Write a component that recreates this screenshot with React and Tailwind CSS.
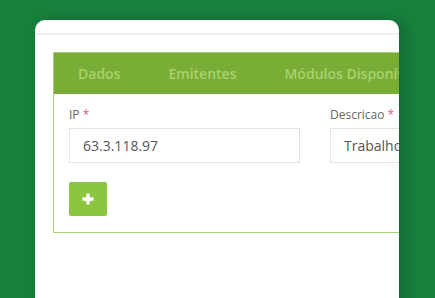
import React from 'react';

const TABS = ['Dados', 'Emitentes', 'Módulos Disponíveis'];

const Field = ({ label, value }) => (
  <div className="flex flex-col w-[231px] shrink-0">
    <label className="text-[12px] text-[#666] leading-[16px] h-[16px]">
      {label} <span className="text-[#e0607e]">*</span>
    </label>
    <input
      readOnly
      value={value}
      className="mt-[5px] h-[35px] w-full border border-[#e3e3e3] px-[13px] text-[14px] text-[#555] outline-none bg-white"
    />
  </div>
);

export default function App() {
  return (
    <div
      className="w-[435px] h-[298px] bg-[#17803d] overflow-hidden pt-[20px] pl-[35px]"
      style={{ fontFamily: '"Open Sans", "Noto Sans", sans-serif' }}
    >
      <div className="w-[364px] h-[300px] bg-white rounded-t-[10px] overflow-hidden shadow-[6px_0_14px_rgba(0,0,0,0.18)]">
        {/* top rule */}
        <div className="h-[15px] border-b-2 border-[#efefef]" />

        <div className="pt-[17px] pl-[18px]">
          <div className="w-[420px] border border-[#a9cf78]">
            {/* Tabs */}
            <div className="h-[41px] bg-[#7aad35] flex items-center">
              {TABS.map((t) => (
                <div key={t} className="px-[24px] text-[14px] font-semibold text-[#a9d16f] whitespace-nowrap">
                  {t}
                </div>
              ))}
            </div>

            {/* Body */}
            <div className="px-[15px] pt-[13px] pb-[16px]">
              <div className="flex gap-[30px]">
                <Field label="IP" value="63.3.118.97" />
                <Field label="Descricao" value="Trabalho" />
              </div>
              <button className="mt-[19px] w-[38px] h-[34px] rounded-[2px] bg-[#8cc63f] flex items-center justify-center">
                <svg width="12" height="12" viewBox="0 0 12 12">
                  <path d="M6 0.5v11M0.5 6h11" stroke="#fff" strokeWidth="3.4" />
                </svg>
              </button>
            </div>
          </div>
        </div>
      </div>
    </div>
  );
}
